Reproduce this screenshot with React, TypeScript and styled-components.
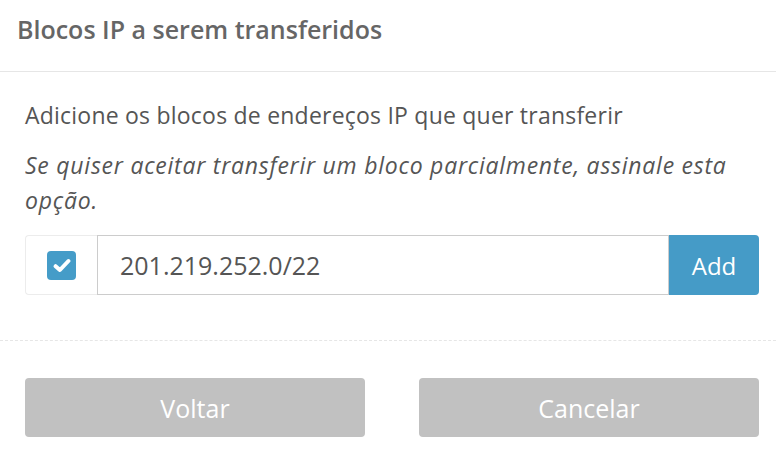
import React from "react";
import styled, { createGlobalStyle } from "styled-components";

const Global = createGlobalStyle`
  html, body { margin: 0; padding: 0; background: #fff; }
  body { font-family: "Open Sans", "Liberation Sans", sans-serif; }
  * { box-sizing: border-box; }
`;

const Page = styled.div`
  width: 776px;
  height: 462px;
  background: #fff;
  display: flex;
  flex-direction: column;
`;

const Header = styled.div`
  height: 72px;
  padding: 0 17px 13px;
  border-bottom: 1px solid #e6e6e6;
  display: flex;
  align-items: center;
`;

const Title = styled.h1`
  margin: 0;
  font-size: 25px;
  font-weight: 600;
  color: #666;
`;

const Body = styled.div`
  padding: 26px 17px 0 25px;
  height: 269px;
  border-bottom: 1px dashed #e6e6e6;
`;

const Lead = styled.p`
  margin: 0 0 16px;
  font-size: 23px;
  line-height: 34px;
  letter-spacing: 0.22px;
  color: #555;
`;

const Hint = styled.p`
  margin: 0 0 17px;
  font-size: 23px;
  line-height: 35px;
  letter-spacing: 0.76px;
  font-style: italic;
  color: #555;
`;

const InputGroup = styled.div`
  display: flex;
  height: 60px;
`;

const CheckAddon = styled.label`
  width: 72px;
  border: 1px solid #ececec;
  border-right: none;
  border-radius: 4px 0 0 4px;
  display: flex;
  align-items: center;
  justify-content: center;
`;

const CheckBox = styled.span`
  width: 29px;
  height: 29px;
  border-radius: 4px;
  background: #459cc8;
  display: flex;
  align-items: center;
  justify-content: center;
`;

const TextInput = styled.input`
  flex: 1;
  min-width: 0;
  height: 60px;
  border: 1px solid #cccccc;
  border-radius: 0;
  padding: 0 22px;
  font-family: "Open Sans", "Liberation Sans", sans-serif;
  font-size: 25px;
  color: #555;
  outline: none;
`;

const AddButton = styled.button`
  width: 90px;
  border: none;
  background: #459bc7;
  color: #fff;
  border-radius: 0 4px 4px 0;
  font-family: "Open Sans", "Liberation Sans", sans-serif;
  font-size: 24px;
  padding: 0;
`;

const Footer = styled.div`
  padding: 37px 17px 0 25px;
  display: flex;
  gap: 54px;
`;

const FooterButton = styled.button`
  flex: 1;
  height: 59px;
  border: none;
  border-radius: 4px;
  background: #c1c1c1;
  color: #fff;
  font-family: "Open Sans", "Liberation Sans", sans-serif;
  font-size: 25px;
  padding: 0;
`;

export default function App() {
  return (
    <Page>
      <Global />
      <Header>
        <Title>Blocos IP a serem transferidos</Title>
      </Header>
      <Body>
        <Lead>Adicione os blocos de endereços IP que quer transferir</Lead>
        <Hint>
          Se quiser aceitar transferir um bloco parcialmente, assinale esta opção.
        </Hint>
        <InputGroup>
          <CheckAddon>
            <CheckBox>
              <svg width="18" height="15" viewBox="0 0 18 15">
                <path
                  d="M2.6 8.2 L6.9 12 L15.4 3"
                  fill="none"
                  stroke="#fff"
                  strokeWidth="4"
                  strokeLinecap="round"
                  strokeLinejoin="round"
                />
              </svg>
            </CheckBox>
          </CheckAddon>
          <TextInput defaultValue="201.219.252.0/22" />
          <AddButton>Add</AddButton>
        </InputGroup>
      </Body>
      <Footer>
        <FooterButton>Voltar</FooterButton>
        <FooterButton>Cancelar</FooterButton>
      </Footer>
    </Page>
  );
}
